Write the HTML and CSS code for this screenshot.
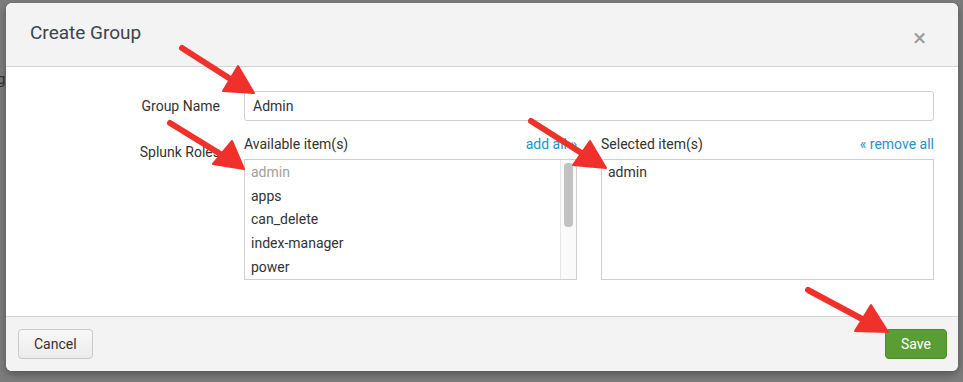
FILE: index.html
```html
<!DOCTYPE html>
<html lang="en">
<head>
  <meta charset="UTF-8" />
  <title>Create Group</title>
  <link rel="stylesheet" href="styles.css">
</head>
<body>

<div class="backdrop">
  <span class="behind-letter">g</span>
  <div class="modal">
    <div class="modal-header">
      <h1>Create Group</h1>
      <span class="close">&times;</span>
    </div>

    <div class="modal-body">
      <div class="form-row">
        <label class="form-label" for="group-name">Group Name</label>
        <input class="text-input" id="group-name" type="text" value="Admin" />
      </div>

      <div class="form-row roles-row">
        <span class="form-label roles-label">Splunk Roles</span>
        <div class="dual-list">
          <div class="list-col">
            <div class="list-head">
              <span>Available item(s)</span>
              <a class="list-link">add all &raquo;</a>
            </div>
            <div class="list-box">
              <ul class="items">
                <li class="disabled">admin</li>
                <li>apps</li>
                <li>can_delete</li>
                <li>index-manager</li>
                <li>power</li>
              </ul>
              <div class="scroll-track"><div class="scroll-thumb"></div></div>
            </div>
          </div>
          <div class="list-col">
            <div class="list-head">
              <span>Selected item(s)</span>
              <a class="list-link">&laquo; remove all</a>
            </div>
            <div class="list-box">
              <ul class="items">
                <li>admin</li>
              </ul>
            </div>
          </div>
        </div>
      </div>
    </div>

    <div class="modal-footer">
      <button class="btn">Cancel</button>
      <button class="btn btn-primary">Save</button>
    </div>
  </div>
</div>

<svg class="arrows" width="963" height="382" viewBox="0 0 963 382">
  <g fill="#f0302a" stroke="#f0302a">
    <line x1="182" y1="48" x2="232" y2="80" stroke-width="6" stroke-linecap="round" />
    <polygon points="254,93 238,66 223,91" stroke-width="2" stroke-linejoin="round" />

    <line x1="170" y1="123" x2="222" y2="155" stroke-width="6" stroke-linecap="round" />
    <polygon points="244,169 232,141 213,164" stroke-width="2" stroke-linejoin="round" />

    <line x1="531" y1="121" x2="583" y2="154" stroke-width="6" stroke-linecap="round" />
    <polygon points="606,168 590,141 573,165" stroke-width="2" stroke-linejoin="round" />

    <line x1="808" y1="290" x2="864" y2="320" stroke-width="6" stroke-linecap="round" />
    <polygon points="888,332 871,305 855,331" stroke-width="2" stroke-linejoin="round" />
  </g>
</svg>

</body>
</html>
```

FILE: styles.css
```css
* { box-sizing: border-box; }
html, body { margin: 0; height: 100%; }
body {
  font-family: Roboto, 'Helvetica Neue', Arial, sans-serif;
  background: #7d7d7d;
  color: #333;
  overflow: hidden;
}

.backdrop {
  position: relative;
  padding: 3px 5px 0 6px;
}
.behind-letter {
  position: absolute;
  left: -3px;
  top: 70px;
  font-size: 15px;
  color: #333;
}

.modal {
  position: relative;
  width: 952px;
  background: #fff;
  border-radius: 6px;
  overflow: hidden;
  box-shadow: 0 3px 8px rgba(0,0,0,0.35);
}

.modal-header {
  height: 64px;
  background: #f3f3f3;
  border-bottom: 1px solid #d2d2d2;
  display: flex;
  align-items: center;
  justify-content: space-between;
  padding: 0 32px 0 24px;
}
.modal-header h1 {
  margin: -4px 0 0 0;
  font-size: 19px;
  font-weight: 400;
  color: #3c444d;
}
.close {
  font-size: 24px;
  color: #9a9a9a;
  line-height: 1;
  margin-top: 6px;
}

.modal-body {
  height: 249px;
  padding-top: 24px;
}

.form-row {
  display: grid;
  grid-template-columns: 214px 690px;
  column-gap: 24px;
  align-items: center;
}
.form-label {
  text-align: right;
  font-size: 14px;
  color: #333;
}
.text-input {
  height: 30px;
  border: 1px solid #cfcfcf;
  border-radius: 3px;
  padding: 0 8px;
  font: inherit;
  font-size: 14px;
  color: #333;
  outline: none;
}

.roles-row {
  margin-top: 14px;
  align-items: start;
}
.roles-label { padding-top: 9px; }

.dual-list {
  display: grid;
  grid-template-columns: 333px 333px;
  column-gap: 24px;
}
.list-head {
  display: flex;
  justify-content: space-between;
  font-size: 14px;
  height: 24px;
  line-height: 18px;
}
.list-link { color: #1e93c6; }

.list-box {
  position: relative;
  height: 121px;
  border: 1px solid #cfcfcf;
  overflow: hidden;
}
.items {
  list-style: none;
  margin: 0;
  padding: 1px 0 0 0;
}
.items li {
  height: 23.7px;
  line-height: 23.7px;
  padding-left: 6px;
  font-size: 14px;
  color: #333;
}
.items li.disabled { color: #a0a0a0; }

.scroll-track {
  position: absolute;
  top: 0;
  right: 0;
  bottom: 0;
  width: 16px;
  background: #fafafa;
  border-left: 1px solid #e6e6e6;
  padding: 3px 3px 0 3px;
}
.scroll-thumb {
  height: 64px;
  border-radius: 4px;
  background: #c2c2c2;
}

.modal-footer {
  height: 55px;
  background: #f3f3f3;
  border-top: 1px solid #d2d2d2;
  display: flex;
  align-items: center;
  justify-content: space-between;
  padding: 0 11px 0 12px;
}
.btn {
  height: 30px;
  padding: 0 15px;
  font-family: inherit;
  font-size: 14px;
  color: #333;
  background: linear-gradient(#f8f8f8, #ececec);
  border: 1px solid #c9c9c9;
  border-radius: 4px;
}
.btn-primary {
  color: #fff;
  background: #5a9d34;
  border-color: #4d8a2c;
  padding: 0 15px;
}

.arrows {
  position: absolute;
  top: 0;
  left: 0;
  pointer-events: none;
}
```
